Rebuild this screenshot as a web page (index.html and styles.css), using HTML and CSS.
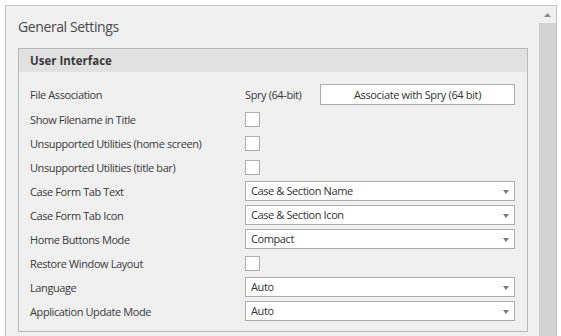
FILE: index.html
```html
<!DOCTYPE html>
<html lang="en">
<head>
  <meta charset="UTF-8" />
  <title>General Settings</title>
  <link rel="stylesheet" href="styles.css">
</head>
<body>
  <div class="window">
    <div class="content">
      <h2 class="page-title">General Settings</h2>

      <section class="group">
        <div class="group-header">User Interface</div>
        <div class="group-body">
          <div class="row first">
            <span class="label">File Association</span>
            <div class="assoc">
              <span>Spry (64-bit)</span>
              <button type="button" class="btn">Associate with Spry (64 bit)</button>
            </div>
          </div>

          <div class="row">
            <span class="label">Show Filename in Title</span>
            <span class="check"></span>
          </div>

          <div class="row">
            <span class="label">Unsupported Utilities (home screen)</span>
            <span class="check"></span>
          </div>

          <div class="row">
            <span class="label">Unsupported Utilities (title bar)</span>
            <span class="check"></span>
          </div>

          <div class="row">
            <span class="label">Case Form Tab Text</span>
            <div class="combo">Case &amp; Section Name</div>
          </div>

          <div class="row">
            <span class="label">Case Form Tab Icon</span>
            <div class="combo">Case &amp; Section Icon</div>
          </div>

          <div class="row">
            <span class="label">Home Buttons Mode</span>
            <div class="combo">Compact</div>
          </div>

          <div class="row">
            <span class="label">Restore Window Layout</span>
            <span class="check"></span>
          </div>

          <div class="row">
            <span class="label">Language</span>
            <div class="combo">Auto</div>
          </div>

          <div class="row">
            <span class="label">Application Update Mode</span>
            <div class="combo">Auto</div>
          </div>
        </div>
      </section>
    </div>

    <div class="scrollbar">
      <div class="scroll-btn">
        <svg width="7" height="4" viewBox="0 0 7 4"><path d="M3.5 0 L7 4 L0 4 Z" fill="#8c8c8c"/></svg>
      </div>
      <div class="scroll-track"></div>
    </div>
  </div>
</body>
</html>
```
FILE: styles.css
```css
* {
  box-sizing: border-box;
}

html, body {
  overflow: hidden;
}

body {
  margin: 0;
  background: #ffffff;
  font-family: 'Open Sans', 'Noto Sans', sans-serif;
  color: #3a3a3a;
}

.window {
  margin: 5px 0 0 5px;
  width: 552px;
  height: 340px;
  border: 1px solid #c3c3c3;
  background: #f0f0f0;
  display: flex;
}

.content {
  flex: 1;
  padding: 11px 11px 0 12px;
}

.page-title {
  margin: 0 0 11px;
  font-size: 14px;
  line-height: 20px;
  font-weight: 400;
  letter-spacing: -0.4px;
  color: #4a4a4a;
}

.group {
  border: 1px solid #b8b8b8;
}

.group-header {
  height: 23px;
  line-height: 23px;
  background: #e1e1e1;
  padding-left: 11px;
  font-size: 11.5px;
  font-weight: 700;
  color: #3a3a3a;
}

.group-body {
  padding: 10px 12px 8px 11px;
}

.row {
  display: grid;
  grid-template-columns: 215px 270px;
  align-items: center;
  height: 24px;
  font-size: 11px;
  letter-spacing: -0.4px;
}

.row.first {
  height: 25px;
}

.assoc {
  display: flex;
  align-items: center;
  justify-content: space-between;
}

.btn {
  width: 195px;
  height: 21px;
  border: 1px solid #acacac;
  background: #ffffff;
  font-family: inherit;
  font-size: 11px;
  letter-spacing: -0.35px;
  color: #333333;
  padding: 0;
}

.check {
  width: 15px;
  height: 15px;
  border: 1px solid #adadad;
  background: #ffffff;
}

.combo {
  height: 20px;
  border: 1px solid #acacac;
  background: #ffffff;
  padding-left: 5px;
  line-height: 18px;
  color: #333333;
  position: relative;
}

.combo::after {
  content: "";
  position: absolute;
  right: 5px;
  top: 8px;
  border-left: 3px solid transparent;
  border-right: 3px solid transparent;
  border-top: 4px solid #7c7c7c;
}

.scrollbar {
  width: 17px;
  display: flex;
  flex-direction: column;
}

.scroll-btn {
  height: 17px;
  display: flex;
  align-items: center;
  justify-content: center;
}

.scroll-track {
  flex: 1;
  background: #d3d3d3;
}
```
